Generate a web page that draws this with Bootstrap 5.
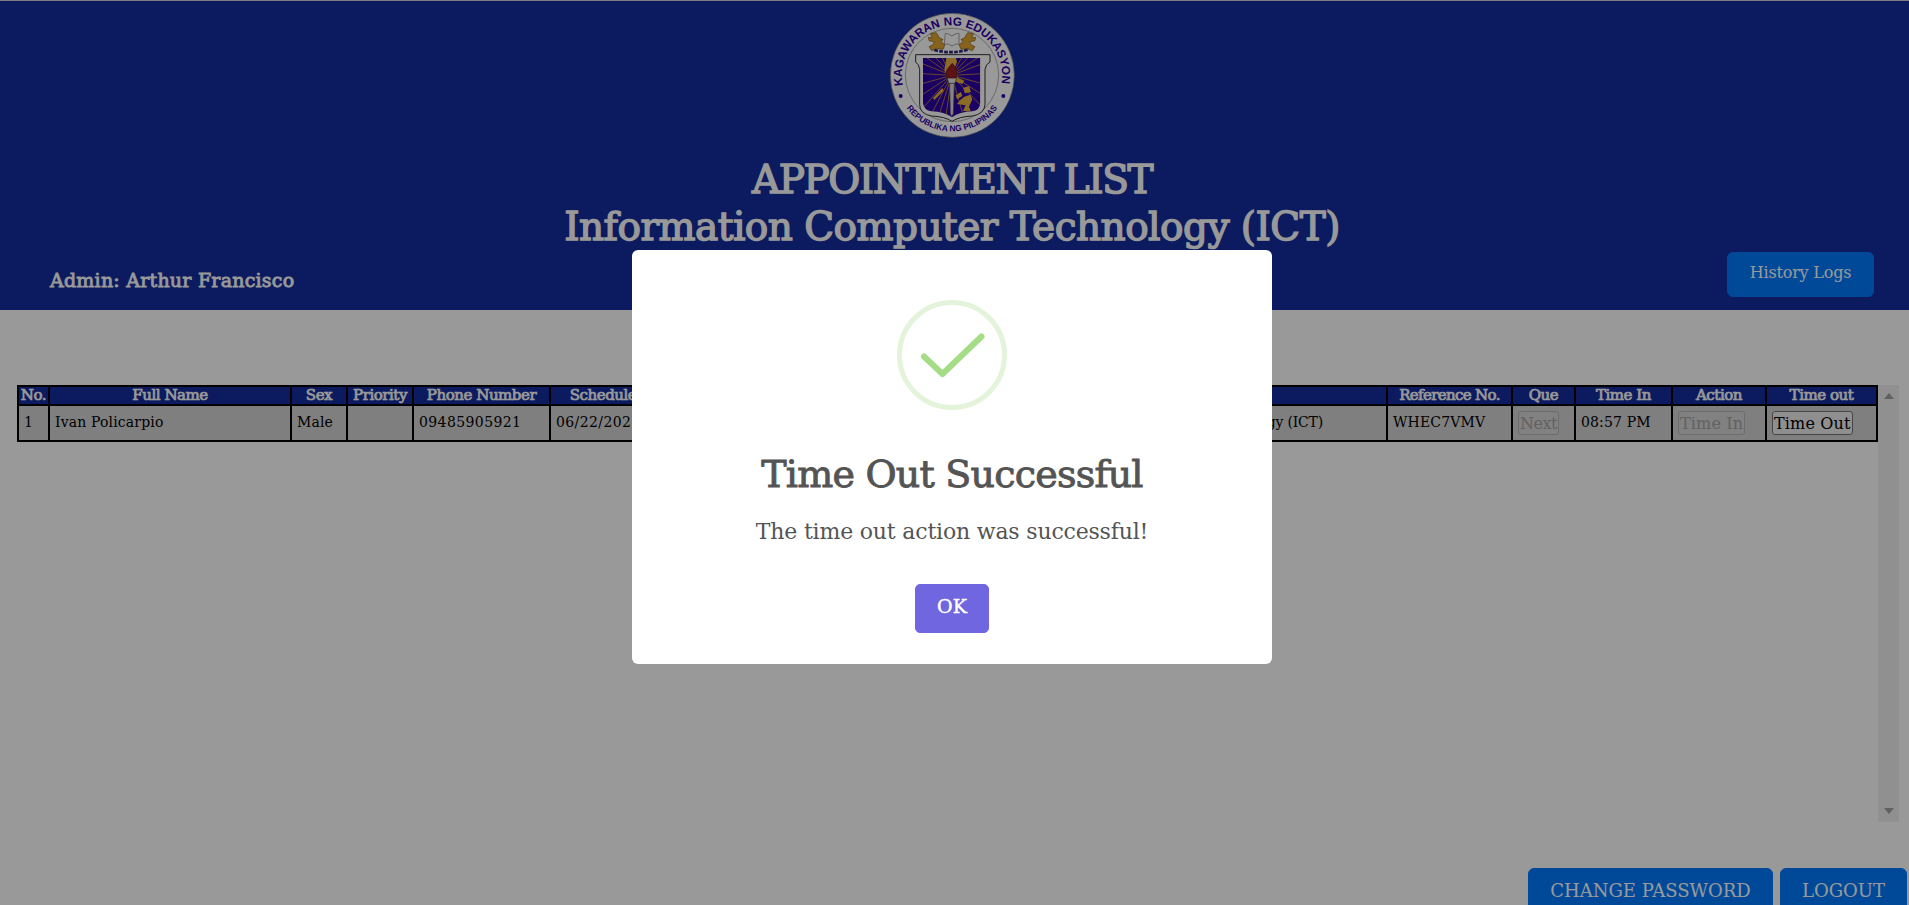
<!DOCTYPE html>
<html lang="en">
<head>
<meta charset="utf-8">
<meta name="viewport" content="width=device-width, initial-scale=1">
<title>Appointment List</title>
<link href="https://cdn.jsdelivr.net/npm/bootstrap@5.3.0/dist/css/bootstrap.min.css" rel="stylesheet">
<style>
  body { font-family: "DejaVu Serif", serif; height: 100vh; background: #fff; color: #000; }
  .top-band { height: 310px; background: #142d9e; border-top: 1px solid #d0d0d0; padding-top: 11px; color: #fff; }
  .brand-block { padding-right: 5px; }
  .seal { width: 126px; height: 126px; }
  .seal text { font-family: "Liberation Sans", sans-serif; font-weight: 700; fill: #2e00a6; }
  .band-title { font-size: 39px; line-height: 47px; font-weight: 400; -webkit-text-stroke: 1.4px #fff; }
  .t-list { letter-spacing: -1.45px; margin-top: 18px; }
  .t-dept { letter-spacing: -.53px; }
  .admin-row { padding: 2px 35px 0 50px; }
  .admin-name { font-size: 19px; letter-spacing: .23px; line-height: 24px; margin-top: 16px; -webkit-text-stroke: .8px #fff; }
  .btn-blue { --bs-btn-bg: #007bff; --bs-btn-border-color: #007bff; --bs-btn-color: #fff; --bs-btn-border-radius: 6px; --bs-btn-padding-x: 0; --bs-btn-padding-y: 0; }
  .btn-history { width: 147px; height: 45px; font-size: 16px; letter-spacing: -.2px; line-height: 24px; padding-bottom: 3px; }
  .list-wrap { margin: 75px 10px 0 17px; height: 437px; }
  .appt { width: 1861px; table-layout: fixed; border-collapse: collapse; }
  .appt th, .appt td { border: 2px solid #000; white-space: nowrap; overflow: hidden; }
  .appt th { background: #142d9e; color: #fff; font-size: 15px; font-weight: 400; letter-spacing: -.45px; line-height: 17px; height: 19px; padding: 0; text-align: center; -webkit-text-stroke: .7px #fff; }
  .appt .tight { letter-spacing: -.65px; }
  .appt td { background: #d4d4d4; font-size: 14px; letter-spacing: .15px; height: 36px; padding: 0 5px 2px; line-height: 20px; }
  .appt .digits { letter-spacing: .4px; }
  .appt .office { padding-right: 63px; letter-spacing: -.2px; }
  .appt .btn-cell { padding-bottom: 0; }
  .cell-btn { font: inherit; font-size: 16px; letter-spacing: .15px; line-height: 21px; height: 24px; padding: 0 1px; border: 1px solid #767676; border-radius: 3px; background: #efefef; display: block; color: #000; }
  .cell-btn.tight { letter-spacing: -.5px; }
  .cell-btn:disabled { background: #d8d8d8; border-color: #b4b4b4; color: #a3a3a3; }
  .rail { width: 21px; background: #f1f1f1; padding: 8px 0; }
  .footer-row { margin-top: 46px; padding-right: 2px; gap: 7px; }
  .btn-foot { height: 54px; font-size: 18px; letter-spacing: 0; line-height: 28px; padding-bottom: 8px; }
  .btn-pass { width: 245px; } .btn-out { width: 127px; }
  .scrim { background: rgba(0,0,0,.4); padding-right: 5px; }
  .popup { width: 640px; height: 414px; margin-top: 250px; border-radius: 6px; background: #fff; color: #545454; padding-top: 50px; }
  .popup-title { font-size: 38px; line-height: 46px; font-weight: 400; letter-spacing: -.78px; margin: 41px 0 0; -webkit-text-stroke: .9px #545454; }
  .popup-text { font-size: 22px; line-height: 30px; letter-spacing: -.18px; margin: 20px 0 0; }
  .btn-ok { --bs-btn-bg: #7066e0; --bs-btn-border-color: #7066e0; --bs-btn-color: #fff; --bs-btn-border-radius: 5px; width: 74px; height: 49px; padding: 0 0 5px; font-size: 19px; line-height: 28px; margin-top: 37px; -webkit-text-stroke: .4px #fff; }
</style>
<script src="https://cdn.jsdelivr.net/npm/bootstrap@5.3.0/dist/js/bootstrap.bundle.min.js"></script>
</head>
<body class="overflow-hidden">
<header class="top-band">
  <div class="brand-block d-flex flex-column align-items-center">
  <svg class="seal flex-shrink-0" viewBox="0 0 378 378">
    <defs>
      <path id="arcTop" d="M42 220A150 150 0 1 1 336 220"/>
      <path id="arcBottom" d="M28 238A168 168 0 0 0 350 238"/>
      <clipPath id="shield"><path d="M102 138H274V274Q272 296 250 298Q212 299 189 316Q166 299 128 298Q105 296 102 274Z"/></clipPath>
    </defs>
    <circle cx="190" cy="190" r="186" fill="#fff" stroke="#777" stroke-width="2"/>
    <circle cx="189" cy="189" r="140" fill="#fff" stroke="#888" stroke-width="2"/>
    <text font-size="35" word-spacing="2"><textPath href="#arcTop" textLength="526" lengthAdjust="spacing">KAGAWARAN NG EDUKASYON</textPath></text>
    <text font-size="25"><textPath href="#arcBottom" startOffset="50%" text-anchor="middle">REPUBLIKA NG PILIPINAS</textPath></text>
    <circle cx="35" cy="252" r="6" fill="#2e00a6"/><circle cx="343" cy="252" r="6" fill="#2e00a6"/>
    <path d="M80 128H303V150Q290 156 288 172V278Q286 306 250 312Q210 314 189 328Q168 314 128 312Q92 306 92 278V172Q90 156 80 150Z" fill="#fff" stroke="#333" stroke-width="3"/>
    <g clip-path="url(#shield)">
      <rect x="100" y="120" width="180" height="200" fill="#2e00a6"/>
      <path stroke="#c9962a" stroke-width="2.4" d="M188 190L100 128M188 190L125 120M188 190L150 120M188 190L228 120M188 190L252 120M188 190L280 128M188 190L280 155M188 190L280 185M188 190L280 215M188 190L280 248M188 190L280 285M188 190L100 155M188 190L100 185M188 190L100 215M188 190L100 248M188 190L100 290M188 190L125 310M188 190L150 310M188 190L170 318M188 190L225 318"/>
      <path d="M172 138L200 134L204 150L194 176L208 198L226 206L220 216L196 208L180 196L166 176ZM222 228L240 222L246 240L228 244ZM200 250L216 240L220 252L204 262ZM226 254L244 248L250 262L240 284L246 300L222 296L230 280L204 276L214 264ZM160 228L164 236L136 264L132 258Z" fill="#eab43c"/>
    </g>
    <path d="M182 212H196L193 304L188 314L184 304Z" fill="#ddd" stroke="#555" stroke-width="2"/>
    <path d="M174 196H203L198 214H179Z" fill="#e8e8e8" stroke="#333" stroke-width="2"/>
    <path d="M176 198Q166 180 178 168Q184 160 190 154Q202 166 202 178Q206 190 200 198Z" fill="#9c2020" stroke="#601010" stroke-width="2"/>
    <path d="M169 64Q180 64 188 72Q198 64 210 64V96Q198 94 189 102Q180 94 166 96Z" fill="#fff" stroke="#777" stroke-width="2"/>
    <g fill="#dfa32f" stroke="#80602a" stroke-width="2">
      <path id="lion" d="M124 64L142 62L152 78L162 82L156 90L168 98L162 112L144 110L128 116L120 104L132 98L136 90L120 86L118 76L130 78Z"/>
      <use href="#lion" transform="matrix(-1 0 0 1 378 0)"/>
    </g>
    <path d="M136 114Q189 128 240 112" fill="none" stroke="#2e2670" stroke-width="8" stroke-dasharray="11 4"/>
  </svg>
  <h1 class="band-title t-list text-center mb-0">APPOINTMENT LIST</h1>
  <h1 class="band-title t-dept text-center mb-0">Information Computer Technology (ICT)</h1>
  </div>
  <div class="admin-row d-flex justify-content-between align-items-start">
    <div class="admin-name">Admin: Arthur Francisco</div>
    <button class="btn btn-blue btn-history">History Logs</button>
  </div>
</header>

<main>
  <div class="list-wrap d-flex">
    <div class="flex-shrink-0">
      <table class="appt">
        <colgroup><col style="width:31px"><col style="width:242px"><col style="width:56px"><col style="width:66px"><col style="width:137px"><col style="width:106px"><col style="width:414px"><col style="width:317px"><col style="width:125px"><col style="width:63px"><col style="width:97px"><col style="width:94px"><col></colgroup>
        <thead><tr><th>No.</th><th>Full Name</th><th>Sex</th><th>Priority</th><th>Phone Number</th><th>Schedule</th><th>Purpose</th><th></th><th class="tight">Reference No.</th><th>Que</th><th>Time In</th><th>Action</th><th>Time out</th></tr></thead>
        <tbody><tr><td>1</td><td>Ivan Policarpio</td><td>Male</td><td></td><td class="digits">09485905921</td><td class="digits">06/22/2023</td><td></td><td class="office text-end">Technology (ICT)</td><td>WHEC7VMV</td><td class="btn-cell"><button class="cell-btn tight" disabled>Next</button></td><td>08:57 PM</td><td class="btn-cell"><button class="cell-btn" disabled>Time In</button></td><td class="btn-cell"><button class="cell-btn">Time Out</button></td></tr></tbody>
      </table>
    </div>
    <div class="rail d-flex flex-column justify-content-between align-items-center">
      <svg width="10" height="6"><path d="M0 6L5 0L10 6Z" fill="#a3a3a3"/></svg>
      <svg width="10" height="6"><path d="M0 0L5 6L10 0Z" fill="#a3a3a3"/></svg>
    </div>
  </div>
  <div class="footer-row d-flex justify-content-end">
    <button class="btn btn-blue btn-foot btn-pass">CHANGE PASSWORD</button>
    <button class="btn btn-blue btn-foot btn-out">LOGOUT</button>
  </div>
</main>

<div class="scrim position-fixed top-0 start-0 w-100 h-100 d-flex justify-content-center align-items-start">
  <div class="popup d-flex flex-column align-items-center" role="dialog">
    <svg class="flex-shrink-0" width="110" height="110" viewBox="0 0 110 110" fill="none">
      <circle cx="55" cy="55" r="52.5" stroke="#e4f4db" stroke-width="5"/>
      <path d="M27 56.5L45.5 74L84.500 36.500" stroke="#a5dc86" stroke-width="6" stroke-linecap="round" stroke-linejoin="round"/>
    </svg>
    <h2 class="popup-title">Time Out Successful</h2>
    <div class="popup-text">The time out action was successful!</div>
    <button class="btn btn-ok">OK</button>
  </div>
</div>
</body>
</html>
